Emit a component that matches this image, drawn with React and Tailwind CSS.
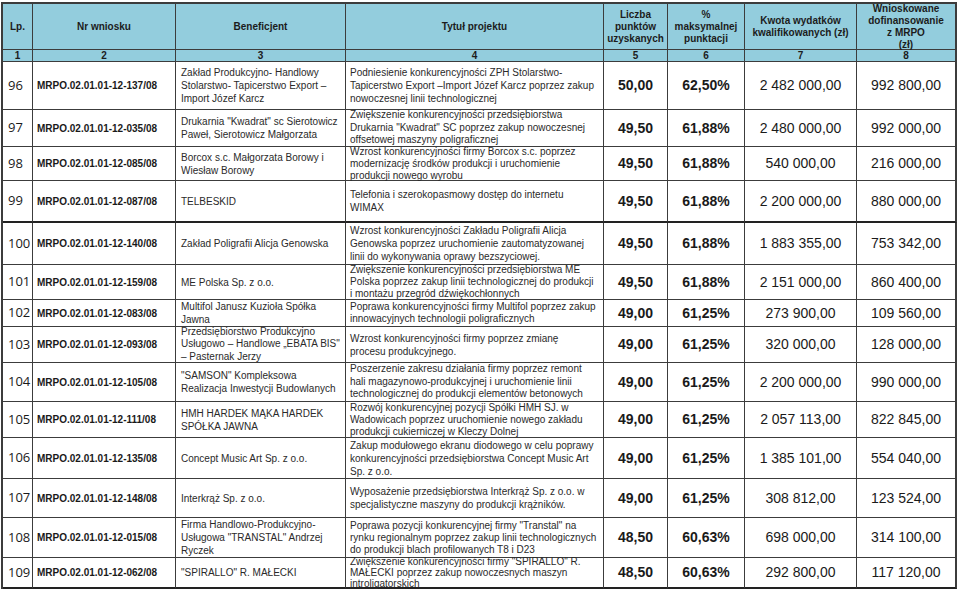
import React from "react";

const rows = [
  { lp: "96", nr: "MRPO.02.01.01-12-137/08", h: "h-[48px]", ben: ["Zakład Produkcyjno- Handlowy", "Stolarstwo- Tapicerstwo Export –", "Import Józef Karcz"], title: ["Podniesienie konkurencyjności ZPH Stolarstwo-", "Tapicerstwo Export –Import Józef Karcz poprzez zakup", "nowoczesnej linii technologicznej"], v: ["50,00", "62,50%", "2 482 000,00", "992 800,00"] },
  { lp: "97", nr: "MRPO.02.01.01-12-035/08", h: "h-[37px]", ben: ["Drukarnia \"Kwadrat\" sc Sierotowicz", "Paweł, Sierotowicz Małgorzata"], title: ["Zwiększenie konkurencyjności przedsiębiorstwa", "Drukarnia \"Kwadrat\" SC poprzez zakup nowoczesnej", "offsetowej maszyny poligraficznej"], v: ["49,50", "61,88%", "2 480 000,00", "992 000,00"], tl: "leading-[12.5px]" },
  { lp: "98", nr: "MRPO.02.01.01-12-085/08", h: "h-[34px]", ben: ["Borcox s.c. Małgorzata Borowy i", "Wiesław Borowy"], title: ["Wzrost konkurencyjności firmy Borcox s.c. poprzez", "modernizację środków produkcji i uruchomienie", "produkcji nowego wyrobu"], v: ["49,50", "61,88%", "540 000,00", "216 000,00"], tl: "leading-[12px]" },
  { lp: "99", nr: "MRPO.02.01.01-12-087/08", h: "h-[42px]", thick: true, ben: ["TELBESKID"], title: ["Telefonia i szerokopasmowy dostęp do internetu", "WIMAX"], v: ["49,50", "61,88%", "2 200 000,00", "880 000,00"] },
  { lp: "100", nr: "MRPO.02.01.01-12-140/08", h: "h-[42px]", ben: ["Zakład Poligrafii Alicja Genowska"], title: ["Wzrost konkurencyjności Zakładu Poligrafii Alicja", "Genowska poprzez uruchomienie zautomatyzowanej", "linii do wykonywania oprawy bezszyciowej."], v: ["49,50", "61,88%", "1 883 355,00", "753 342,00"] },
  { lp: "101", nr: "MRPO.02.01.01-12-159/08", h: "h-[35px]", ben: ["ME Polska Sp. z o.o."], title: ["Zwiększenie konkurencyjności przedsiębiorstwa ME", "Polska poprzez zakup linii technologicznej do produkcji", "i montażu przegród dźwiękochłonnych"], v: ["49,50", "61,88%", "2 151 000,00", "860 400,00"], tl: "leading-[12px]" },
  { lp: "102", nr: "MRPO.02.01.01-12-083/08", h: "h-[27px]", ben: ["Multifol Janusz Kuzioła Spółka", "Jawna"], title: ["Poprawa konkurencyjności firmy Multifol poprzez zakup", "innowacyjnych technologii poligraficznych"], v: ["49,00", "61,25%", "273 900,00", "109 560,00"], tl: "leading-[12.5px]" },
  { lp: "103", nr: "MRPO.02.01.01-12-093/08", h: "h-[36px]", ben: ["Przedsiębiorstwo Produkcyjno", "Usługowo – Handlowe „EBATA BIS\"", " – Pasternak Jerzy"], title: ["Wzrost konkurencyjności firmy poprzez zmianę", "procesu produkcyjnego."], v: ["49,00", "61,25%", "320 000,00", "128 000,00"], bl: "leading-[12.5px]" },
  { lp: "104", nr: "MRPO.02.01.01-12-105/08", h: "h-[39px]", ben: ["\"SAMSON\" Kompleksowa", "Realizacja Inwestycji Budowlanych"], title: ["Poszerzenie zakresu działania firmy poprzez remont", "hali magazynowo-produkcyjnej i uruchomienie linii", "technologicznej do produkcji elementów betonowych"], v: ["49,00", "61,25%", "2 200 000,00", "990 000,00"], tl: "leading-[12.5px]" },
  { lp: "105", nr: "MRPO.02.01.01-12-111/08", h: "h-[36px]", ben: ["HMH HARDEK MĄKA HARDEK", "SPÓŁKA JAWNA"], title: ["Rozwój konkurencyjnej pozycji Spółki HMH SJ. w", "Wadowicach poprzez uruchomienie nowego zakładu", "produkcji cukierniczej w Kleczy Dolnej"], v: ["49,00", "61,25%", "2 057 113,00", "822 845,00"], tl: "leading-[12px]" },
  { lp: "106", nr: "MRPO.02.01.01-12-135/08", h: "h-[41px]", ben: ["Concept Music Art Sp. z o.o."], title: ["Zakup modułowego ekranu diodowego w celu poprawy", "konkurencyjności przedsiębiorstwa Concept Music Art", "Sp. z o.o."], v: ["49,00", "61,25%", "1 385 101,00", "554 040,00"] },
  { lp: "107", nr: "MRPO.02.01.01-12-148/08", h: "h-[39px]", ben: ["Interkrąż Sp. z o.o."], title: ["Wyposażenie przedsiębiorstwa Interkrąż Sp. z o.o. w", "specjalistyczne maszyny do produkcji krążników."], v: ["49,00", "61,25%", "308 812,00", "123 524,00"] },
  { lp: "108", nr: "MRPO.02.01.01-12-015/08", h: "h-[40px]", ben: ["Firma Handlowo-Produkcyjno-", "Usługowa \"TRANSTAL\" Andrzej", "Ryczek"], title: ["Poprawa pozycji konkurencyjnej firmy \"Transtal\" na", "rynku regionalnym poprzez zakup linii technologicznych", "do produkcji blach profilowanych T8 i D23"], v: ["48,50", "60,63%", "698 000,00", "314 100,00"], tl: "leading-[12px]" },
  { lp: "109", nr: "MRPO.02.01.01-12-062/08", h: "h-[31px]", last: true, ben: ["\"SPIRALLO\" R. MAŁECKI"], title: ["Zwiększenie konkurencyjności firmy \"SPIRALLO\" R.", "MAŁECKI poprzez zakup nowoczesnych maszyn", "introligatorskich"], v: ["48,50", "60,63%", "292 800,00", "117 120,00"], tl: "leading-[11px]" },
];

const headers = [
  ["Lp."],
  ["Nr wniosku"],
  ["Beneficjent"],
  ["Tytuł projektu"],
  ["Liczba", "punktów", "uzyskanych"],
  ["%", "maksymalnej", "punktacji"],
  ["Kwota wydatków", "kwalifikowanych (zł)"],
  ["Wnioskowane", "dofinansowanie", "z MRPO", "(zł)"],
];

function Lines({ lines }) {
  return (
    <div className="flex flex-col">
      {lines.map((l, i) => (
        <span key={i} className="whitespace-nowrap">{l}</span>
      ))}
    </div>
  );
}

export default function App() {
  return (
    <div className="w-[960px] h-[590px] bg-white overflow-hidden font-['Liberation_Sans',Arial,sans-serif] text-[#1a1a1a]">
      <div className="ml-[1px] mt-[2px] w-[956px] border-l-2 border-t-2 border-[#3c3c3c] grid grid-cols-[30px_143px_170px_258px_64px_77px_112px_100px]">
        {headers.map((h, i) => (
          <div
            key={"h" + i}
            className={`h-[46px] bg-[#93cddd] border-b border-[#3c3c3c] flex items-center justify-center text-center font-bold text-[10px] leading-[12px] text-[#1c1c1c] ${i === 7 ? "border-r-2" : "border-r"}`}
          >
            <Lines lines={h} />
          </div>
        ))}
        {headers.map((h, i) => (
          <div
            key={"n" + i}
            className={`h-[12px] bg-[#93cddd] border-b border-[#3c3c3c] flex items-center justify-center font-bold text-[10px] leading-[10px] text-[#1c1c1c] ${i === 7 ? "border-r-2" : "border-r"}`}
          >
            {i + 1}
          </div>
        ))}
        {rows.map((r) => {
          const b = r.thick || r.last ? "border-b-2 border-[#222]" : "border-b border-[#3c3c3c]";
          const base = `${r.h} ${b} flex items-center overflow-visible`;
          return (
            <React.Fragment key={r.lp}>
              <div className={`${base} border-r border-r-[#3c3c3c] pl-[5px] text-[13px] font-['Open_Sans',sans-serif]`}>{r.lp}</div>
              <div className={`${base} border-r border-r-[#3c3c3c] pl-[4px] text-[10px] font-bold`}>{r.nr}</div>
              <div className={`${base} border-r border-r-[#3c3c3c] pl-[5px] text-[10px] ${r.bl || "leading-[13px]"} text-[#2a2a2a]`}>
                <Lines lines={r.ben} />
              </div>
              <div className={`${base} border-r border-r-[#3c3c3c] pl-[4px] text-[10px] ${r.tl || "leading-[13px]"} text-[#2a2a2a]`}>
                <Lines lines={r.title} />
              </div>
              <div className={`${base} border-r border-r-[#3c3c3c] justify-center text-[14px] font-bold`}>{r.v[0]}</div>
              <div className={`${base} border-r border-r-[#3c3c3c] justify-center text-[14px] font-bold`}>{r.v[1]}</div>
              <div className={`${base} border-r border-r-[#3c3c3c] justify-center text-[14px]`}>{r.v[2]}</div>
              <div className={`${base} border-r-2 border-r-[#3c3c3c] justify-center text-[14px]`}>{r.v[3]}</div>
            </React.Fragment>
          );
        })}
      </div>
    </div>
  );
}
